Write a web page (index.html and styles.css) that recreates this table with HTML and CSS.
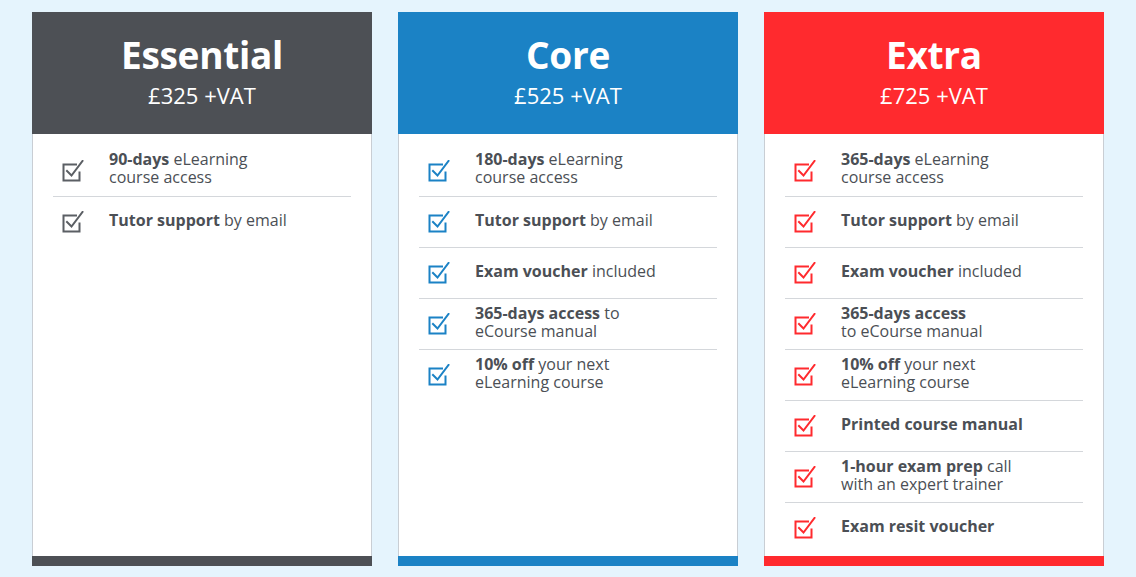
FILE: index.html
```html
<!DOCTYPE html>
<html>
<head>
<meta charset="utf-8">
<link rel="stylesheet" href="styles.css">
</head>
<body>
<div class="plans">
  <div class="card essential">
    <div class="head"><div class="title">Essential</div><div class="price">£325 +VAT</div></div>
    <ul class="list">
      <li><svg class="ic" viewBox="0 0 22 22"><path d="M14 4.5H1.5v16h16v-8"/><path d="M5 11l4.5 4.5L20.5 1"/></svg><span><b>90-days</b> eLearning<br>course access</span></li>
      <li><svg class="ic" viewBox="0 0 22 22"><path d="M14 4.5H1.5v16h16v-8"/><path d="M5 11l4.5 4.5L20.5 1"/></svg><span><b>Tutor support</b> by email</span></li>
    </ul>
    <div class="bar"></div>
  </div>
  <div class="card core">
    <div class="head"><div class="title">Core</div><div class="price">£525 +VAT</div></div>
    <ul class="list">
      <li><svg class="ic" viewBox="0 0 22 22"><path d="M14 4.5H1.5v16h16v-8"/><path d="M5 11l4.5 4.5L20.5 1"/></svg><span><b>180-days</b> eLearning<br>course access</span></li>
      <li><svg class="ic" viewBox="0 0 22 22"><path d="M14 4.5H1.5v16h16v-8"/><path d="M5 11l4.5 4.5L20.5 1"/></svg><span><b>Tutor support</b> by email</span></li>
      <li><svg class="ic" viewBox="0 0 22 22"><path d="M14 4.5H1.5v16h16v-8"/><path d="M5 11l4.5 4.5L20.5 1"/></svg><span><b>Exam voucher</b> included</span></li>
      <li><svg class="ic" viewBox="0 0 22 22"><path d="M14 4.5H1.5v16h16v-8"/><path d="M5 11l4.5 4.5L20.5 1"/></svg><span><b>365-days access</b> to<br>eCourse manual</span></li>
      <li><svg class="ic" viewBox="0 0 22 22"><path d="M14 4.5H1.5v16h16v-8"/><path d="M5 11l4.5 4.5L20.5 1"/></svg><span><b>10% off</b> your next<br>eLearning course</span></li>
    </ul>
    <div class="bar"></div>
  </div>
  <div class="card extra">
    <div class="head"><div class="title">Extra</div><div class="price">£725 +VAT</div></div>
    <ul class="list">
      <li><svg class="ic" viewBox="0 0 22 22"><path d="M14 4.5H1.5v16h16v-8"/><path d="M5 11l4.5 4.5L20.5 1"/></svg><span><b>365-days</b> eLearning<br>course access</span></li>
      <li><svg class="ic" viewBox="0 0 22 22"><path d="M14 4.5H1.5v16h16v-8"/><path d="M5 11l4.5 4.5L20.5 1"/></svg><span><b>Tutor support</b> by email</span></li>
      <li><svg class="ic" viewBox="0 0 22 22"><path d="M14 4.5H1.5v16h16v-8"/><path d="M5 11l4.5 4.5L20.5 1"/></svg><span><b>Exam voucher</b> included</span></li>
      <li><svg class="ic" viewBox="0 0 22 22"><path d="M14 4.5H1.5v16h16v-8"/><path d="M5 11l4.5 4.5L20.5 1"/></svg><span><b>365-days access</b><br>to eCourse manual</span></li>
      <li><svg class="ic" viewBox="0 0 22 22"><path d="M14 4.5H1.5v16h16v-8"/><path d="M5 11l4.5 4.5L20.5 1"/></svg><span><b>10% off</b> your next<br>eLearning course</span></li>
      <li><svg class="ic" viewBox="0 0 22 22"><path d="M14 4.5H1.5v16h16v-8"/><path d="M5 11l4.5 4.5L20.5 1"/></svg><span><b>Printed course manual</b></span></li>
      <li><svg class="ic" viewBox="0 0 22 22"><path d="M14 4.5H1.5v16h16v-8"/><path d="M5 11l4.5 4.5L20.5 1"/></svg><span><b>1-hour exam prep</b> call<br>with an expert trainer</span></li>
      <li><svg class="ic" viewBox="0 0 22 22"><path d="M14 4.5H1.5v16h16v-8"/><path d="M5 11l4.5 4.5L20.5 1"/></svg><span><b>Exam resit voucher</b></span></li>
    </ul>
    <div class="bar"></div>
  </div>
</div>
</body>
</html>
```

FILE: styles.css
```css
html, body {
  margin: 0;
  padding: 0;
}
body {
  background: #e5f4fd;
  font-family: "Open Sans", "Liberation Sans", sans-serif;
  width: 1136px;
  height: 577px;
  overflow: hidden;
}
.plans {
  display: flex;
  gap: 26px;
  padding: 12px 32px 0 32px;
  height: 554px;
}
.card {
  width: 340px;
  display: flex;
  flex-direction: column;
  background: #fff;
}
.head {
  height: 122px;
  box-sizing: border-box;
  padding-top: 23px;
  text-align: center;
  color: #fff;
}
.title {
  font-size: 37px;
  font-weight: 700;
  line-height: 40px;
  letter-spacing: -0.3px;
}
.price {
  font-size: 22px;
  line-height: 30px;
  margin-top: 5px;
}
.list {
  list-style: none;
  margin: 0;
  padding: 11px 20px 0 20px;
  flex: 1;
  border-left: 1px solid #c9ced4;
  border-right: 1px solid #c9ced4;
}
.list li {
  height: 51px;
  box-sizing: border-box;
  display: flex;
  align-items: center;
  padding-bottom: 5px;
  border-top: 1px solid #d4d7db;
  font-size: 16px;
  line-height: 18px;
  color: #4b4f55;
}
.list li:first-child {
  border-top: none;
}
.list li b {
  font-weight: 700;
}
.ic {
  width: 22px;
  height: 22px;
  margin-left: 9px;
  margin-right: 25px;
  margin-top: 5px;
  flex: none;
  fill: none;
  stroke-width: 2;
  stroke: currentColor;
  stroke-linecap: square;
}
.bar {
  height: 10px;
}
.essential .head, .essential .bar { background: #4d5055; }
.core .head, .core .bar { background: #1b82c5; }
.extra .head, .extra .bar { background: #ff2a2e; }
.essential .ic { color: #5b5f64; }
.core .ic { color: #1b82c5; }
.extra .ic { color: #ff2a2e; }
```
